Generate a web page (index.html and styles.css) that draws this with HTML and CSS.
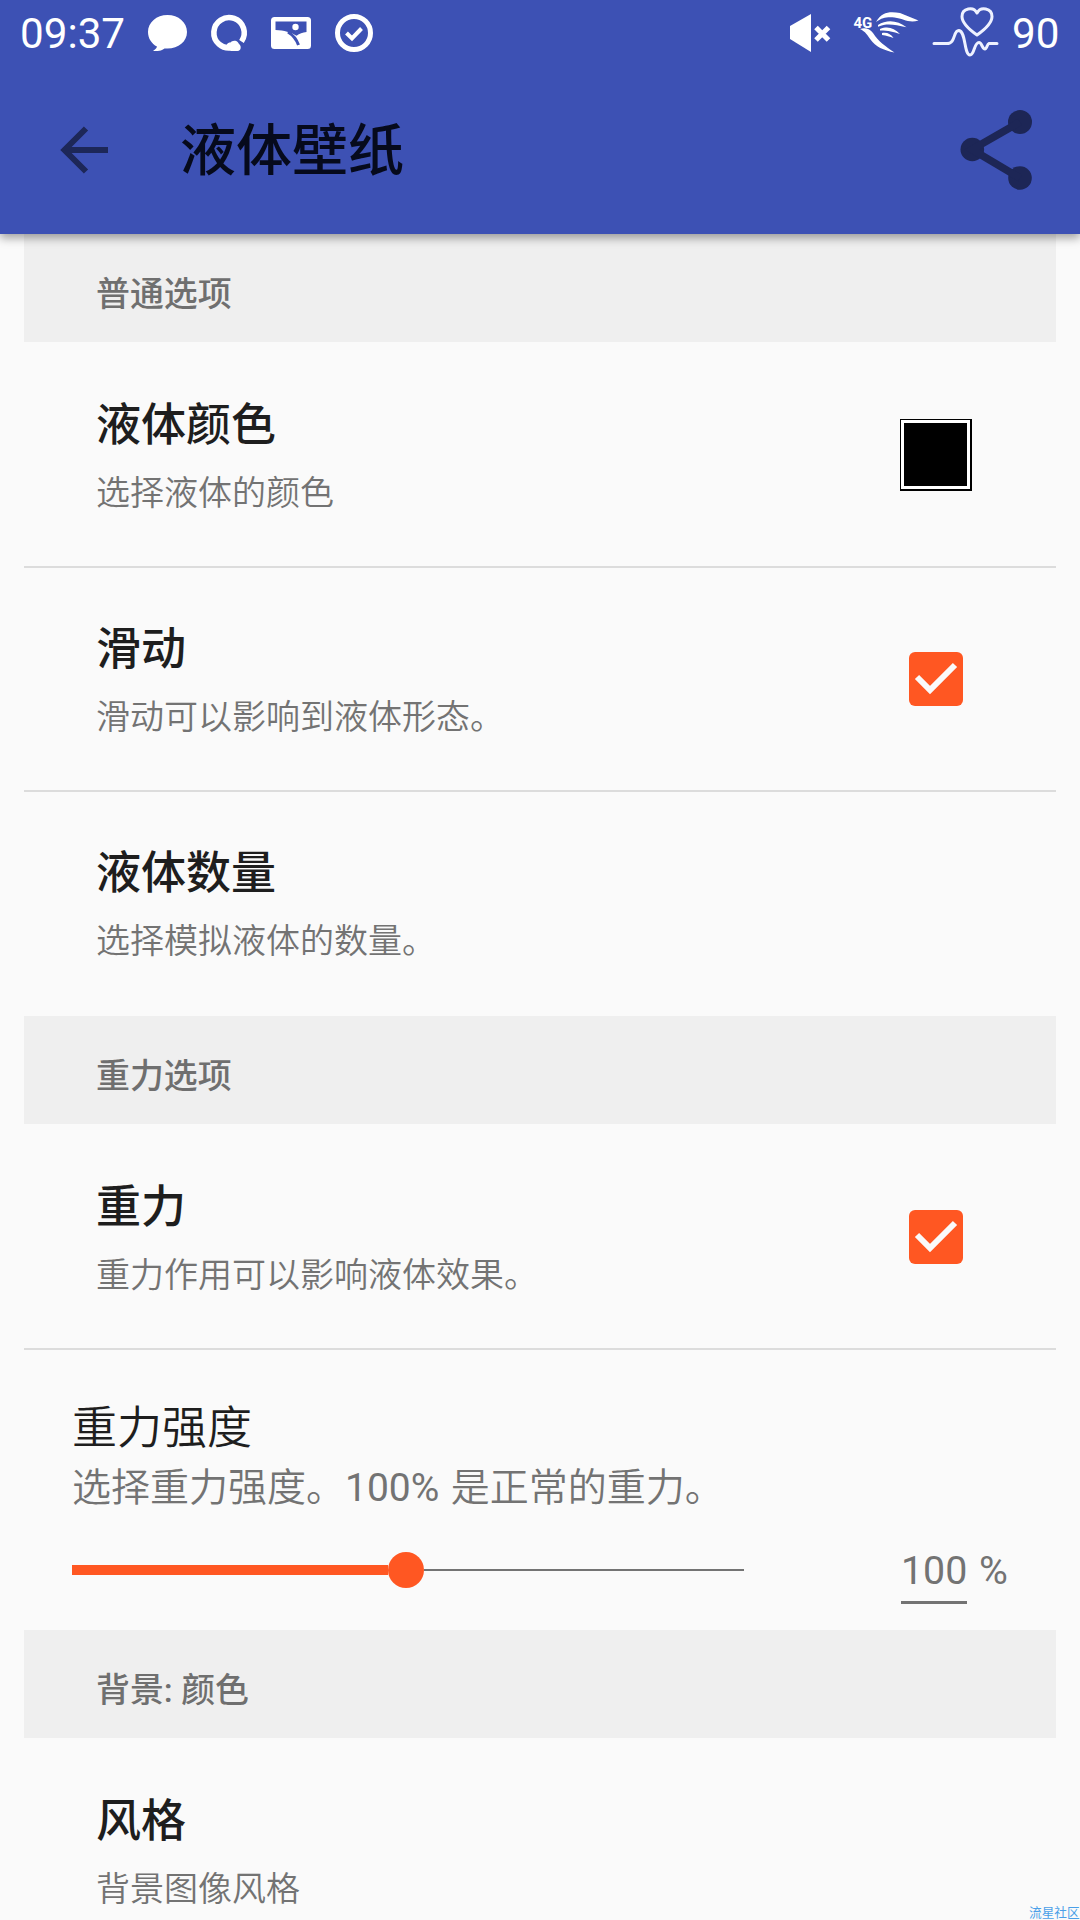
FILE: index.html
```html
<!DOCTYPE html>
<html lang="zh-CN">
<head>
<meta charset="utf-8">
<title>液体壁纸</title>
<link rel="stylesheet" href="styles.css">
</head>
<body>
<div class="screen">
  <header class="header">
    <div class="status-bar">
      <span class="clock">09:37</span>
      <svg class="status-left" width="240" height="70" viewBox="140 0 240 70">
        <path fill="#fff" d="M167.500 15c11 0 19.500 7.500 19.500 17s-8.500 16.500-19.500 16.500l-3-.1c-2 1.700-4 2.600-11.500 2.600 2.500-1.500 3.500-2.700 4-4.400-5.500-3-9-8.200-9-14.600 0-9.500 8.500-17 19.500-17z"/>
        <path fill="none" stroke="#fff" stroke-width="5.600" d="M232 47.700A15.200 15.200 0 1 1 241.500 41.500"/>
        <path fill="#fff" d="M231 51c-1-1.500-4-3-4.500-6 1-2 2.500-2.500 4-2.500 1-1.500 3-2.200 5-1.700 1.800.5 2.800 1.700 3.500 3.200 2.500 1.500 2.500 7-1.500 7z"/>
        <rect x="271" y="17" width="40" height="32" rx="3.500" fill="#fff"/>
        <path fill="#3d51b4" d="M275.500 21.500h31V32c-4 .5-7 1.500-10 3.800-6-3.800-12-5.300-21-5.800z"/>
        <path fill="none" stroke="#3d51b4" stroke-width="3" d="M288 32c5 3 8.500 7.500 10.500 13"/>
        <circle cx="295.500" cy="27" r="3.200" fill="#fff"/>
        <circle cx="354" cy="33" r="16.500" fill="none" stroke="#fff" stroke-width="5"/>
        <path fill="none" stroke="#fff" stroke-width="4" d="M346.500 33l5.500 5.500 9.500-10"/>
      </svg>
      <svg class="status-right" width="220" height="70" viewBox="780 0 220 70">
        <path fill="#fff" d="M790 26l21-12v38l-21-13z"/>
        <path stroke="#fff" stroke-width="5" d="M816 27.500l12.500 12.500M828.500 27.500L816 40"/>
        <text class="network" x="853.500" y="28">4G</text>
        <path fill="#fff" d="M876 22c6-11 15-10.500 24-9l18.500 7.500c-10 3-15-2-24-3-8-.5-12 0-18.500 4.500zM878 25c9-6 20-4.500 28.500 2.300-12-2.500-19-4.500-28.500 -.5zM880 29c8-3 14-1 20 5-7-2-11-3.500-20-3.500zM882 33c5-1 9 1 11.500 5-4-1.500-7-2.500-11.500-3zM860 29c6-2 10 .5 13 4 6 9 12 13 21.500 19.500-11-2-19-6-24-13-3-4-5-8-10.500-10.500z"/>
        <path fill="none" stroke="#eef1ff" stroke-width="3" stroke-linecap="round" stroke-linejoin="round" d="M934 43.500h13c9 0 6-13.500 12-13 7 1 5 24.500 11 24.500 4.500 0 4-12.500 9-12.500 3 0 3 6.500 6 6.500 2 0 2-5 4-5.500h8M977 35c-10-7-15-12.500-15-18.500 0-8.500 11.500-10.500 15-3.500 3.500-7 15-5 15 3.500 0 6-5 11.500-15 18.500z"/>
      </svg>
      <span class="battery">90</span>
    </div>
    <div class="app-bar">
      <svg class="back" width="48" height="48" viewBox="0 0 48 48"><path fill="none" stroke="#1d2758" stroke-width="6" d="M48 24H5M26 2.500L4.500 24 26 45.500"/></svg>
      <h1 class="title">液体壁纸</h1>
      <svg class="share" width="72" height="80" viewBox="0 0 72 80"><g fill="#1d2656"><circle cx="12.300" cy="39.500" r="11.800"/><circle cx="60" cy="12" r="12"/><circle cx="60" cy="68" r="11.800"/></g><path fill="none" stroke="#1d2656" stroke-width="7.500" d="M60 12L12 39.500 60 68"/></svg>
    </div>
  </header>
  <main class="list">
    <h2 class="category">普通选项</h2>
    <section class="row first ruled">
      <div class="text"><h3>液体颜色</h3><p>选择液体的颜色</p></div>
      <div class="swatch"></div>
    </section>
    <section class="row ruled">
      <div class="text"><h3>滑动</h3><p>滑动可以影响到液体形态。</p></div>
      <svg class="checkbox" width="54" height="54" viewBox="0 0 54 54"><rect width="54" height="54" rx="6" fill="#ff5722"/><path fill="none" stroke="#fafafa" stroke-width="6" d="M8 25l13 13 25-25"/></svg>
    </section>
    <section class="row">
      <div class="text"><h3>液体数量</h3><p>选择模拟液体的数量。</p></div>
    </section>
    <h2 class="category">重力选项</h2>
    <section class="row first ruled">
      <div class="text"><h3>重力</h3><p>重力作用可以影响液体效果。</p></div>
      <svg class="checkbox" width="54" height="54" viewBox="0 0 54 54"><rect width="54" height="54" rx="6" fill="#ff5722"/><path fill="none" stroke="#fafafa" stroke-width="6" d="M8 25l13 13 25-25"/></svg>
    </section>
    <section class="strength">
      <h3>重力强度</h3>
      <p>选择重力强度。<span class="figure">100%</span> 是正常的重力。</p>
      <div class="control">
        <div class="slider"><div class="fill"></div><div class="thumb"></div><div class="track"></div></div>
        <span class="value">100</span><span class="unit">%</span>
      </div>
    </section>
    <h2 class="category">背景: 颜色</h2>
    <section class="row first">
      <div class="text"><h3>风格</h3><p>背景图像风格</p></div>
    </section>
  </main>
  <div class="watermark">流星社区</div>
</div>
</body>
</html>
```
FILE: styles.css
```css
* { box-sizing: border-box; }
body, h1, h2, h3, p { margin: 0; }
body { background: #fafafa; font-family: Roboto, "Noto Sans CJK SC", sans-serif; }
svg { display: block; flex: none; }
.screen { position: relative; width: 1080px; height: 1920px; overflow: hidden; background: #fafafa; }
.header { position: relative; height: 234px; background: #3d51b4; box-shadow: 0 4px 9px rgba(0,0,0,.36); }
.status-bar { height: 66px; display: flex; align-items: flex-start; padding-left: 20px; color: #fff; font-size: 42.2px; line-height: 67px; }
.clock { width: 120px; }
.status-right { margin-left: 400px; }
.battery { padding-left: 12px; }
.network { fill: #fff; font: 700 15px Roboto, sans-serif; }
.app-bar { height: 168px; display: flex; align-items: center; padding: 0 48px 0 60px; }
.title { margin-left: 72px; padding-top: 2px; flex: 1; font-size: 56px; line-height: 80px; font-weight: 500; color: #060a1c; }
.list { padding: 0 24px; }
.category { height: 108px; padding: 12px 72px 0; background: #efefef; font-size: 33.9px; line-height: 98px; font-weight: 500; color: #6f6f6f; }
.row { height: 224px; display: flex; align-items: center; padding: 0 84px 0 72px; border-bottom: 2px solid transparent; }
.first { height: 226px; padding-top: 2px; }
.ruled { border-bottom-color: #dcdcdc; }
.text { flex: 1; padding-top: 1px; }
.row h3 { font-size: 45px; line-height: 66px; font-weight: 500; color: #1e1e1e; }
.row p { margin-top: 9px; font-size: 34px; line-height: 50px; font-weight: 350; color: #737373; }
.swatch { width: 72px; height: 72px; background: #000; border: solid #000; border-width: 1px 2px 2px 1px; box-shadow: inset 0 0 0 3px #fff; }
.checkbox { margin-right: 9px; }
.strength { height: 280px; padding: 48px 48px 0; }
.strength h3 { font-size: 45px; line-height: 62px; font-weight: 350; color: #1e1e1e; }
.strength p { font-size: 39px; line-height: 56px; font-weight: 350; color: #737373; }
.figure { font-weight: 400; margin-right: 2px; }
.control { display: flex; align-items: center; height: 108px; color: #737373; font-size: 39.375px; }
.slider { width: 672px; height: 36px; display: flex; align-items: center; }
.fill { width: 316px; height: 10px; background: #ff5722; }
.thumb { width: 36px; height: 36px; border-radius: 50%; background: #ff5722; }
.track { flex: 1; height: 2px; background: #737373; }
.value { width: 66px; height: 68px; line-height: 70px; margin-left: 157px; text-align: center; border-bottom: 3px solid #737373; }
.unit { margin-left: 12px; }
.watermark { position: absolute; left: 1029px; top: 1906px; white-space: nowrap; font-size: 12.7px; line-height: 14px; color: #4a9fe8; }
```
